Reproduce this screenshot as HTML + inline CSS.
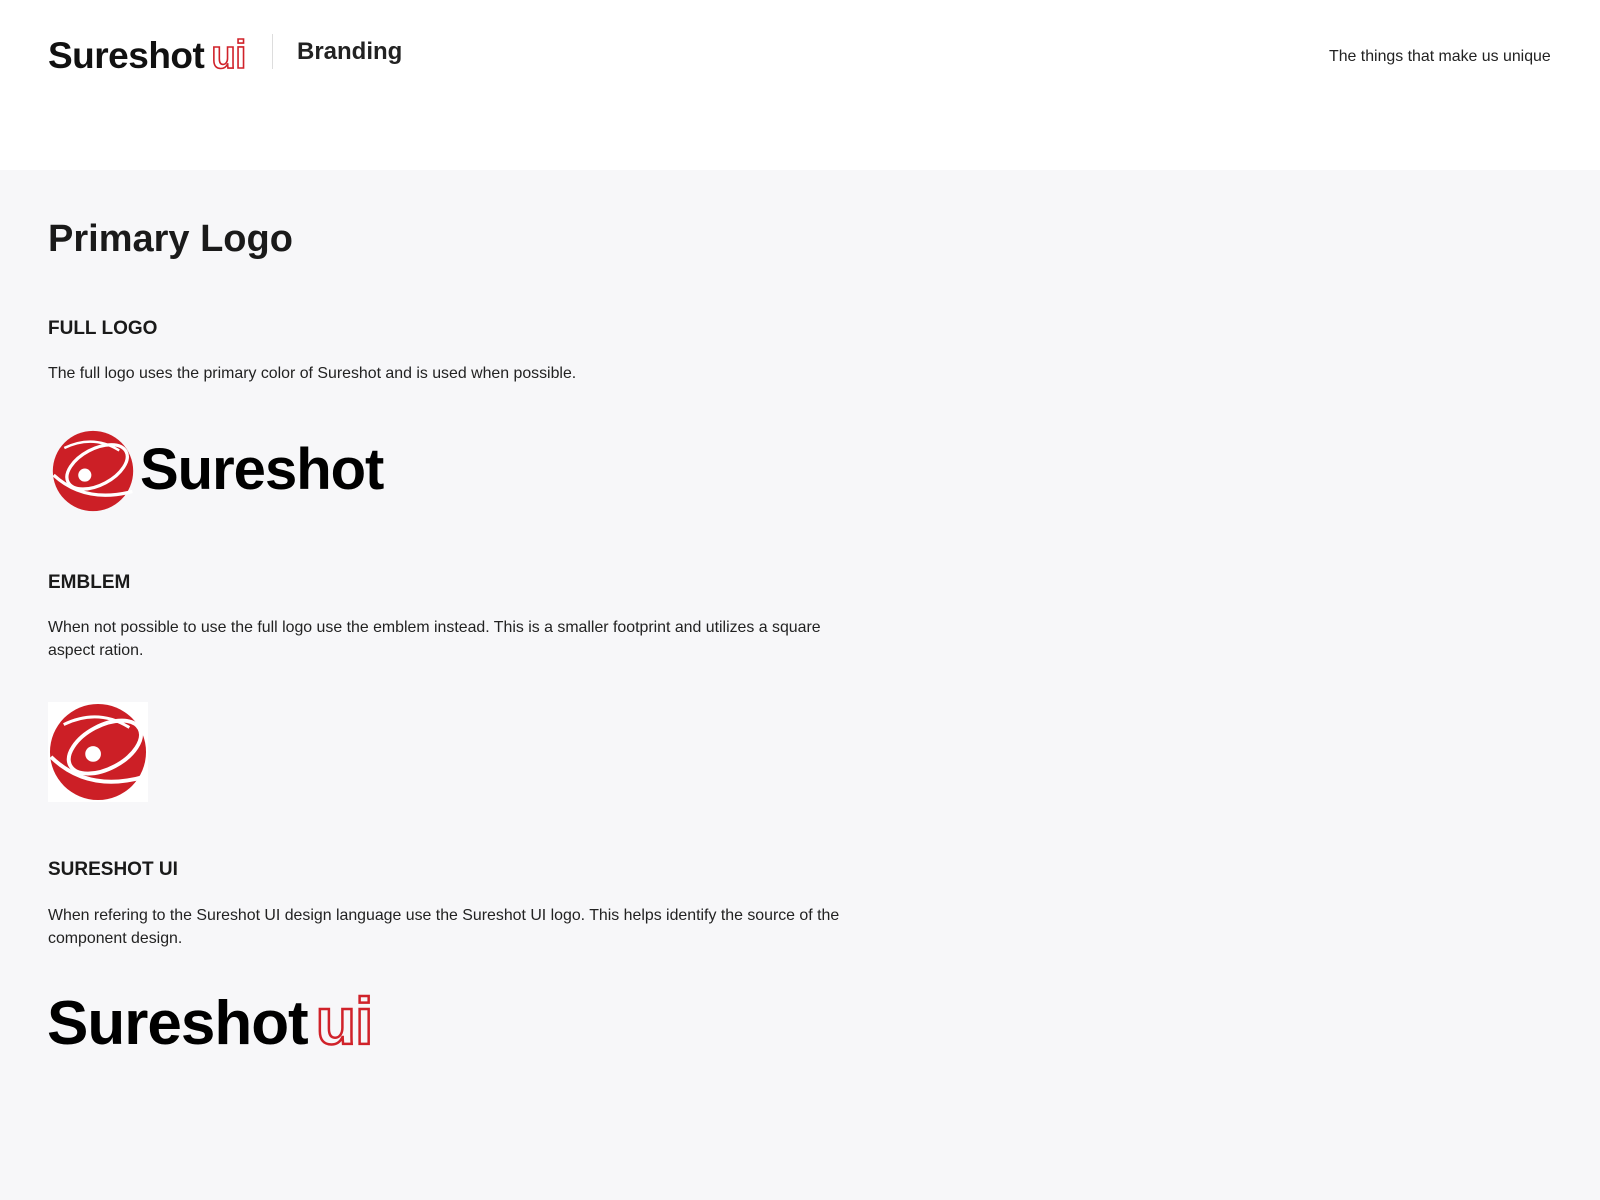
<!DOCTYPE html>
<html><head><meta charset="utf-8"><style>
body{margin:0;width:1600px;height:1200px;background:#f7f7f9;font-family:"Liberation Sans",sans-serif;color:#1a1a1a;position:relative;overflow:hidden}
.hdr{position:absolute;left:0;top:0;width:1600px;height:170px;background:#fff}
.abs{position:absolute;white-space:nowrap}
.ui{color:transparent;-webkit-text-stroke:1.6px #d0222a;font-weight:bold}
h3{margin:0;font-size:19px;font-weight:bold;position:absolute}
p{margin:0;position:absolute;font-size:15.9px;line-height:23px;color:#222}
</style></head><body>
<div class="hdr"></div>
<div class="abs" style="left:48px;top:33px;font-size:37px;font-weight:bold;letter-spacing:-0.5px;color:#111">Sureshot<span class="ui" style="font-size:40px;margin-left:7px">ui</span></div>
<div class="abs" style="left:272px;top:34px;width:1px;height:35px;background:#ddd"></div>
<div class="abs" style="left:297px;top:38px;font-size:24px;font-weight:bold;color:#222">Branding</div>
<div class="abs" style="left:1329px;top:48px;font-size:15.9px;color:#222">The things that make us unique</div>

<div class="abs" style="left:48px;top:218px;font-size:38px;font-weight:bold;color:#1a1a1a">Primary Logo</div>
<h3 style="left:48px;top:318px">FULL LOGO</h3>
<p style="left:48px;top:362px">The full logo uses the primary color of Sureshot and is used when possible.</p>
<svg class="abs" style="left:52px;top:430px" width="82" height="82" viewBox="0 0 100 100"><circle cx="50" cy="50" r="49" fill="#cc1f26"/><g transform="rotate(-28 55 45)"><ellipse cx="55" cy="45" rx="40" ry="22" fill="none" stroke="#fff" stroke-width="4"/></g><path d="M2 55 Q40 90 98 75" stroke="#fff" stroke-width="4" fill="none"/><path d="M15 22 Q50 5 82 25" stroke="#fff" stroke-width="3" fill="none"/><circle cx="40" cy="55" r="8" fill="#fff"/></svg>
<div class="abs" style="left:140px;top:436px;font-size:58px;font-weight:bold;letter-spacing:-1px;color:#000">Sureshot</div>

<h3 style="left:48px;top:572px">EMBLEM</h3>
<p style="left:48px;top:616px;width:800px;white-space:normal">When not possible to use the full logo use the emblem instead. This is a smaller footprint and utilizes a square aspect ration.</p>
<div class="abs" style="left:48px;top:702px;width:100px;height:100px;background:#fff"></div>
<svg class="abs" style="left:49px;top:703px" width="98" height="98" viewBox="0 0 100 100"><circle cx="50" cy="50" r="49" fill="#cc1f26"/><g transform="rotate(-28 57 45)"><ellipse cx="57" cy="45" rx="40" ry="22" fill="none" stroke="#fff" stroke-width="4"/></g><path d="M2 55 Q40 92 98 75" stroke="#fff" stroke-width="4" fill="none"/><path d="M15 22 Q50 5 82 25" stroke="#fff" stroke-width="3" fill="none"/><circle cx="45" cy="52" r="8" fill="#fff"/></svg>

<h3 style="left:48px;top:859px">SURESHOT UI</h3>
<p style="left:48px;top:904px;width:800px;white-space:normal">When refering to the Sureshot UI design language use the Sureshot UI logo. This helps identify the source of the component design.</p>
<div class="abs" style="left:47px;top:983px;font-size:62px;font-weight:bold;letter-spacing:-1px;color:#000">Sureshot<span class="ui" style="font-size:66px;-webkit-text-stroke-width:2.5px;margin-left:8px">ui</span></div>
</body></html>
